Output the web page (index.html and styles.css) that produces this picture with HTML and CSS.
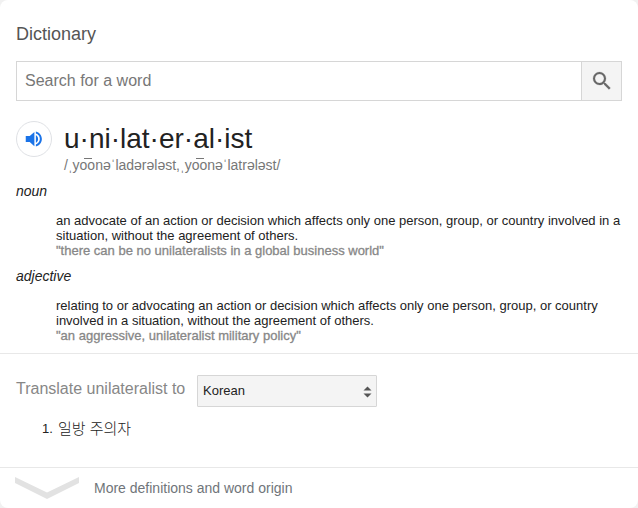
FILE: index.html
```html
<!DOCTYPE html>
<html lang="en">
<head>
<meta charset="utf-8">
<title>Dictionary</title>
<link rel="stylesheet" href="styles.css">
</head>
<body>
<main class="card">
  <h1 class="title">Dictionary</h1>
  <form class="search">
    <div class="search-field">Search for a word</div>
    <div class="search-button">
      <svg width="24" height="24" viewBox="0 0 24 24"><path fill="#686868" stroke="#686868" stroke-width=".2" d="M15.5 14h-.79l-.28-.27A6.47 6.47 0 0 0 16 9.5 6.5 6.5 0 1 0 9.5 16c1.61 0 3.09-.59 4.23-1.57l.27.28v.79l5 4.99L20.49 19l-4.99-5zm-6 0C7.01 14 5 11.99 5 9.5S7.01 5 9.5 5 14 7.01 14 9.5 11.99 14 9.5 14z"/></svg>
    </div>
  </form>
  <header class="entry">
    <div class="speaker">
      <svg width="18" height="18" viewBox="0 0 24 24"><path fill="#1a73e8" d="M1 8v8h5.300L12.500 21.500V2.500L6.300 8zM14.500 7v10c1.800-.8 3-2.700 3-5s-1.200-4.200-3-5zM14.500 2v2.800c3.200 1 5.300 3.800 5.300 7.200s-2.100 6.200-5.300 7.200V22c4.700-1.100 8-5.200 8-10s-3.300-8.900-8-10z"/></svg>
    </div>
    <div>
      <div class="word">u·ni·lat·er·al·ist</div>
      <div class="phonetic">/ˌy<span class="long">oo</span>nəˈladərələst,ˌy<span class="long">oo</span>nəˈlatrələst/</div>
    </div>
  </header>
  <section class="sense">
    <div class="pos">noun</div>
    <p class="definition">an advocate of an action or decision which affects only one person, group, or country involved in a<br>situation, without the agreement of others.</p>
    <p class="example">"there can be no unilateralists in a global business world"</p>
  </section>
  <section class="sense">
    <div class="pos">adjective</div>
    <p class="definition">relating to or advocating an action or decision which affects only one person, group, or country<br>involved in a situation, without the agreement of others.</p>
    <p class="example">"an aggressive, unilateralist military policy"</p>
  </section>
  <section class="translate">
    <div class="translate-row">
      <span class="translate-label">Translate unilateralist to</span>
      <div class="select"><span>Korean</span>
        <svg class="arrows" width="9" height="12" viewBox="0 0 9 12"><path fill="#555" d="M.5 4.500 4.500.500 8.500 4.500zM.5 7.500h8L4.500 11.500z"/></svg>
      </div>
    </div>
    <div class="translation"><span class="number">1.</span><span class="korean" lang="ko">일방 주의자</span></div>
  </section>
  <footer class="more">
    <svg width="64" height="22" viewBox="0 0 64 22"><path fill="#e2e2e2" d="M0 0 32 15.500 64 0V6L32 22 0 6z"/></svg>
    <span>More definitions and word origin</span>
  </footer>
</main>
</body>
</html>
```
FILE: styles.css
```css
* { box-sizing: border-box; }
body { margin: 0; background: #f1f1f1; font-family: "Liberation Sans", "Noto Sans CJK KR", sans-serif; color: #222; }
.card { height: 508px; overflow: hidden; background: #fff; border-radius: 8px; }
.title { margin: 0; padding: 23px 16px 0; height: 61px; font-size: 18px; line-height: 22px; font-weight: 400; color: #555; }
.search { display: flex; height: 40px; margin: 0 16px; border: 1px solid #d6d6d6; }
.search-field { flex: 1; padding-left: 8px; font-size: 16px; line-height: 38px; color: #777; }
.search-button { display: flex; align-items: center; justify-content: center; width: 40px; background: #f4f4f4; border-left: 1px solid #d6d6d6; }
.entry { display: flex; gap: 12px; height: 81px; padding: 20px 16px 0; }
.speaker { display: flex; align-items: center; justify-content: center; width: 36px; height: 36px; border: 1px solid #dfe1e5; border-radius: 50%; }
.word { height: 35px; font-size: 28px; line-height: 35px; white-space: nowrap; }
.phonetic { font-size: 14px; line-height: 18px; color: #777; white-space: nowrap; }
.long { background: linear-gradient(#777, #777) 4px 1px / 8px 1px no-repeat; }
.sense { height: 85px; padding: 0 16px; }
.pos { height: 31px; font-size: 14px; line-height: 18px; font-style: italic; }
.definition, .example { margin: 0 0 0 40px; font-size: 13px; line-height: 15px; white-space: nowrap; }
.example { color: #878787; -webkit-text-stroke: .3px #878787; }
.translate { height: 114px; margin-top: 1px; padding: 21px 16px 0; border-top: 1px solid #e8e8e8; }
.translate-row { display: flex; align-items: flex-start; }
.translate-label { width: 181px; font-size: 16px; line-height: 27px; color: #878787; white-space: nowrap; }
.select { display: flex; align-items: center; justify-content: space-between; width: 180px; height: 32px; padding: 0 4px 1px 5px; background: #f4f4f4; border: 1px solid #d6d6d6; border-radius: 1px; font-size: 13px; }
.arrows { margin-top: 2px; }
.translation { display: flex; margin: 12px 0 0 26px; font-size: 13px; line-height: 20px; }
.number { width: 16px; }
.korean { font-weight: 300; font-size: 15px; }
.more { display: flex; align-items: center; gap: 15px; height: 42px; padding: 0 15px 1px; border-top: 1px solid #e8e8e8; font-size: 14px; color: #70757a; }
```
